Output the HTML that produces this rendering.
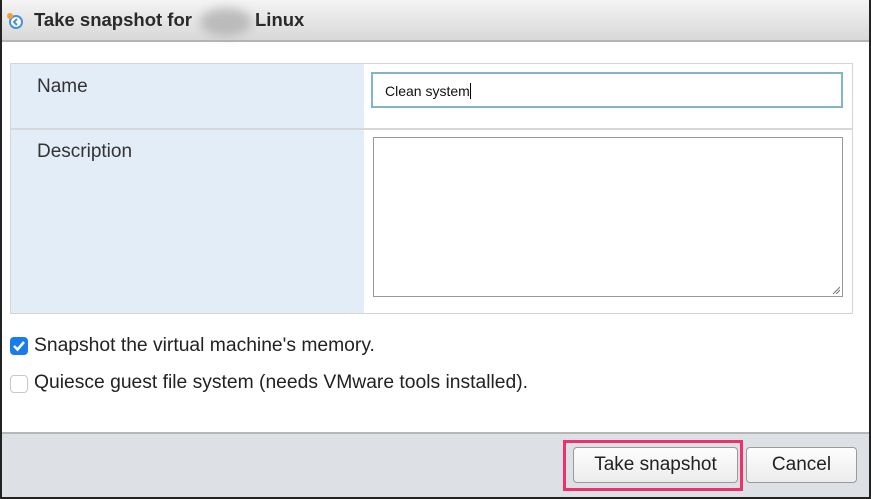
<!DOCTYPE html>
<html><head><style>
*{box-sizing:border-box;margin:0;padding:0}
body{width:871px;height:499px;overflow:hidden;background:#fff;font-family:"Liberation Sans",sans-serif;position:relative}
.frame{position:absolute;inset:0;border-left:2px solid #222;border-right:2px solid #222;border-bottom:2px solid #222}
.title{position:absolute;left:0;top:0;width:871px;height:42px;background:linear-gradient(#f4f4f4,#d8d8d8);border-bottom:2px solid #b4b4b4}
.title span{position:absolute;top:9px;font-size:18.5px;font-weight:bold;color:#2a2a2a;white-space:nowrap}
.blur{position:absolute;left:200px;top:8px;width:52px;height:28px;border-radius:50%;background:#aaa;filter:blur(5px);opacity:.7}
.tbl{position:absolute;left:10px;top:63px;width:843px;height:251px;border:1px solid #d5d5d5}
.lc{position:absolute;left:0;top:0;width:353px;height:249px;background:#e3edf7}
.div{position:absolute;left:0;top:64px;width:841px;height:2px;background:#d7d7d7}
.lbl{position:absolute;left:26px;font-size:19px;color:#333}
.inp{position:absolute;left:371px;top:72px;width:472px;height:36px;border:2px solid #7fb6c9;font-size:14px;padding:9px 12px;color:#111}
.ta{position:absolute;left:373px;top:137px;width:470px;height:160px;border:1px solid #999}
.cb{position:absolute;left:10px;width:18px;height:18px;border-radius:4px}
.ct{position:absolute;left:34px;font-size:19.3px;color:#222;white-space:nowrap}
.foot{position:absolute;left:2px;top:432px;width:867px;height:65px;background:#dde0e4;border-top:2px solid #b7b7b7}
.btn{position:absolute;top:447px;height:36px;border:1px solid #9a9a9a;border-radius:4px;background:linear-gradient(#fdfdfd,#ececec);font-size:19px;color:#222;text-align:center;line-height:34px}
.pink{position:absolute;left:563px;top:440px;width:180px;height:51px;border:3px solid #f0306a}
</style></head><body>
<div class="title"><svg style="position:absolute;left:5px;top:11px" width="20" height="20" viewBox="0 0 20 20"><circle cx="11" cy="11" r="7" fill="#4a8fd8"/><circle cx="11" cy="11" r="5" fill="#fff"/><path d="M12 8l-3 3 3 3" stroke="#4a8fd8" stroke-width="2" fill="none"/><circle cx="5" cy="5" r="3" fill="#f0a030"/></svg><span style="left:34px">Take snapshot for</span><span style="left:255px">Linux</span><div class="blur"></div></div>
<div class="tbl"><div class="lc"></div><div class="div"></div>
<div class="lbl" style="top:12px">Name</div><div class="lbl" style="top:77px">Description</div></div>
<div class="inp">Clean system <span style="border-left:1px solid #000"> </span></div>
<div class="ta"><svg style="position:absolute;right:2px;bottom:2px" width="8" height="8"><path d="M1 8L8 1M4 8L8 4" stroke="#777"/></svg></div>
<div class="cb" style="top:337px;background:#1a7ce8"><svg width="18" height="18"><path d="M4 9l3.5 3.5L14 5" stroke="#fff" stroke-width="2.5" fill="none"/></svg></div>
<div class="ct" style="top:335px">Snapshot the virtual machine's memory.</div>
<div class="cb" style="top:375px;border:1px solid #c8c8c8;background:#fff"></div>
<div class="ct" style="top:372px">Quiesce guest file system (needs VMware tools installed).</div>
<div class="foot"></div>
<div class="btn" style="left:573px;width:165px">Take snapshot</div>
<div class="btn" style="left:746px;width:111px">Cancel</div>
<div class="pink"></div>
<div class="frame"></div>
</body></html>
